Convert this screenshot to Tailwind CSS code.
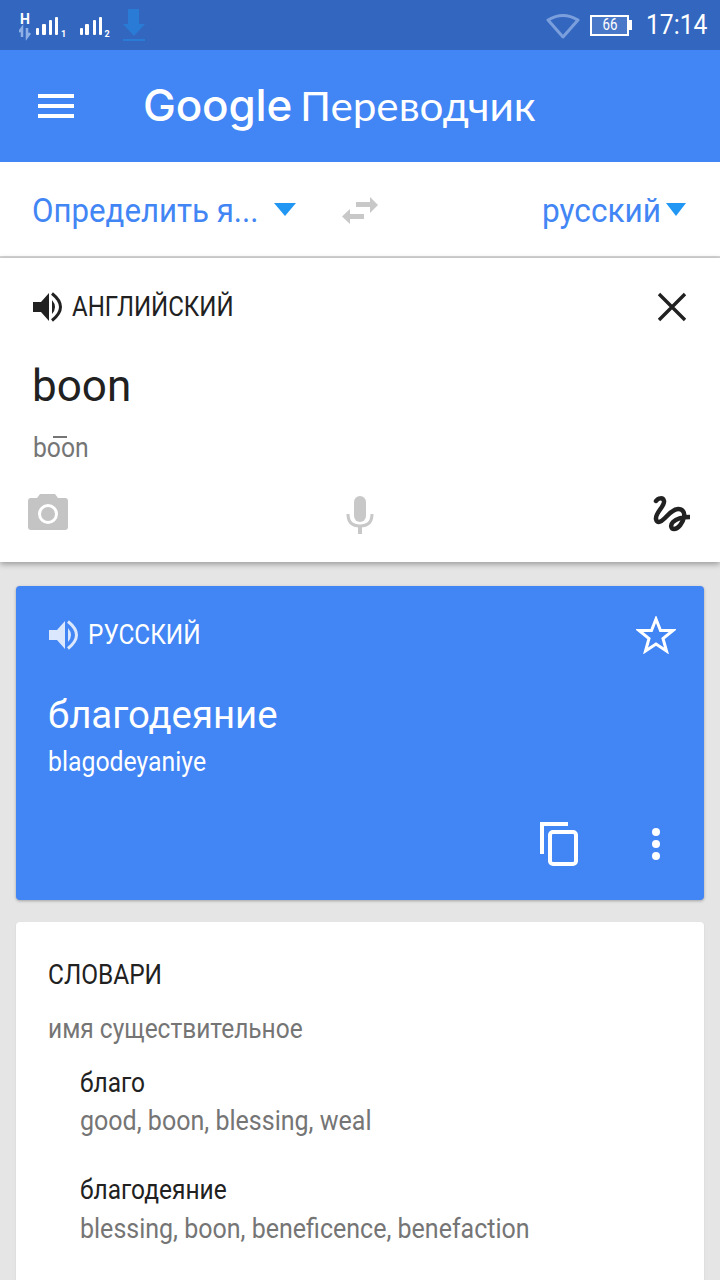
<!DOCTYPE html>
<html>

<head>
  <meta charset="UTF-8">
  <meta name="viewport" content="width=device-width, initial-scale=1.0">
  <script src="https://cdn.jsdelivr.net/npm/@tailwindcss/browser@4"></script>
  <title>Google Переводчик</title>
</head>

<body class="font-['Roboto',sans-serif]">
  <div class="w-[720px] h-[1280px] overflow-hidden bg-[#e5e5e5] flex flex-col">

    <!-- status bar -->
    <div class="h-[50px] shrink-0 bg-[#3367bf] flex items-center pl-[19px] pr-[12px] text-white">
      <svg width="104" height="44" viewBox="0 0 104 44" class="shrink-0">
        <text x="1" y="21" font-family="Roboto" font-size="14" font-weight="700" fill="#fff">H</text>
        <path d="M3 34V25L0 29M8 25V34L11 30" stroke="#8fb0e6" stroke-width="2.500" fill="none" />
        <g fill="#fff">
          <rect x="17" y="25" width="3" height="7" rx="1" />
          <rect x="23" y="21" width="4" height="11" rx="1" />
          <rect x="30" y="17" width="3" height="15" rx="1" />
          <rect x="36" y="14" width="3" height="18" rx="1" />
          <rect x="61" y="25" width="3" height="7" rx="1" />
          <rect x="66" y="21" width="4" height="11" rx="1" />
          <rect x="74" y="17" width="3" height="15" rx="1" />
          <rect x="80" y="14" width="3" height="18" rx="1" />
        </g>
        <text x="42" y="34" font-family="Roboto" font-size="9" font-weight="700" fill="#fff">1</text>
        <text x="85.500" y="34" font-family="Roboto" font-size="9" font-weight="700" fill="#fff">2</text>
      </svg>
      <svg width="22" height="32" viewBox="0 0 22 32" class="shrink-0">
        <path d="M5 0H16V15H22L11 27L0 15H5Z M0 30H22V32H0Z" fill="#2a7bd6" />
      </svg>
      <svg width="34" height="27" viewBox="0 0 34 27" class="shrink-0 ml-auto">
        <path d="M2 8Q17 -1 32 8L17 25Z" fill="none" stroke="#7a9fdc" stroke-width="3" stroke-linejoin="round" />
      </svg>
      <div class="ml-[10px] w-[39px] h-[21px] border-2 border-white flex items-center justify-center bg-[#4a78c8] text-[16px] leading-none">
        <div class="scale-x-[0.83]">66</div>
      </div>
      <div class="w-[3px] h-[10px] bg-white mr-[14px]"></div>
      <div class="w-[62px] text-[28px] leading-none whitespace-nowrap scale-x-[0.88] origin-left">17:14</div>
    </div>

    <!-- app bar -->
    <div class="h-[112px] shrink-0 bg-[#4285f4] flex items-center pl-[38px] text-white">
      <div class="w-[36px] flex flex-col gap-[6px] shrink-0">
        <div class="h-[4px] bg-white"></div>
        <div class="h-[4px] bg-white"></div>
        <div class="h-[4px] bg-white"></div>
      </div>
      <div class="ml-[69px] -mt-[3px] flex items-baseline">
        <div class="w-[157px] font-['Inter',sans-serif] text-[44px] leading-none font-medium tracking-[-0.2px]">Google</div>
        <div class="text-[41px] leading-none font-['Lato',sans-serif] scale-x-[1.03] origin-left">Переводчик</div>
      </div>
    </div>

    <!-- language picker -->
    <div class="h-[96px] shrink-0 bg-white border-b-2 border-[#d6d6d6] flex items-center pl-[32px] pr-[34px] pt-[2px] text-[#4285f4] text-[34px] leading-none">
      <div class="scale-x-[0.918] origin-left w-[242px] whitespace-nowrap">Определить я...</div>
      <div class="w-0 h-0 border-l-[11px] border-r-[11px] border-t-[13px] border-l-transparent border-r-transparent border-t-[#2196f3] -mt-[2px]"></div>
      <svg width="36" height="27" viewBox="0 0 36 27" class="ml-[46px]">
        <path d="M14 5H28V0L36 8L28 16V10H14Z M22 17V22H8V27L0 19.500L8 12V17Z" fill="#c8c8c8" />
      </svg>
      <div class="ml-auto w-[120px] scale-x-[0.93] origin-left whitespace-nowrap">русский</div>
      <div class="w-0 h-0 border-l-[10px] border-r-[10px] border-t-[13px] border-l-transparent border-r-transparent border-t-[#2196f3] ml-[4px] -mt-[2px]"></div>
    </div>

    <!-- source panel -->
    <div class="h-[304px] shrink-0 bg-white shadow-[0_2px_6px_rgba(0,0,0,0.35)] relative flex flex-col">
      <div class="h-[98px] flex items-center pl-[32px] pr-[32px] text-[#212121]">
        <svg width="32" height="30" viewBox="0 0 32 30">
          <path d="M1 10H9L17 1V29L9 20H1Z" fill="#212121" />
          <path d="M20 8Q26 15 20 22Z" fill="#212121" />
          <path d="M20 1.500Q37 15 20 28.500" fill="none" stroke="#212121" stroke-width="3" />
        </svg>
        <div class="ml-[8px] text-[27px] leading-none scale-x-[0.89] origin-left whitespace-nowrap">АНГЛИЙСКИЙ</div>
        <svg width="30" height="30" viewBox="0 0 30 30" class="ml-auto mr-[1px]">
          <path d="M2 2L28 28M28 2L2 28" stroke="#212121" stroke-width="3.400" fill="none" />
        </svg>
      </div>
      <div class="pl-[32px] text-[44px] leading-[60px] text-[#212121]">boon</div>
      <div class="relative ml-[33px] mt-[14px] text-[27px] leading-[36px] text-[#757575]">
        <div class="scale-x-[0.915] origin-left">boon</div>
        <div class="absolute left-[20px] top-[6px] w-[14px] h-[2px] bg-[#757575]"></div>
      </div>
      <div class="mt-[28px] pl-[28px] pr-[30px] flex items-start justify-between">
        <svg width="40" height="36" viewBox="0 0 40 36">
          <path d="M12 0H27L30 4H37Q40 4 40 7V33Q40 36 37 36H3Q0 36 0 33V7Q0 4 3 4H9Z" fill="#c4c4c4" />
          <circle cx="20" cy="20" r="8.500" fill="none" stroke="#fff" stroke-width="3" />
        </svg>
        <svg width="28" height="38" viewBox="0 0 28 38" class="mt-[2px] -ml-[1px]">
          <rect x="8" y="0" width="12" height="26" rx="6" fill="#c8c8c8" />
          <path d="M2 18Q2 30 14 30Q26 30 26 18" fill="none" stroke="#c8c8c8" stroke-width="3" />
          <path d="M14 29V38" stroke="#c8c8c8" stroke-width="4" />
        </svg>
        <svg width="37" height="36" viewBox="0 0 37 36" class="mt-[2px]">
          <path d="M3 5C5 2 10 1 11 5C12 10 2 17 3 23C4 28 8 26 12 22C16 18 20 13 25 13C30 13 32 17 31 21C30 27 25 33 21 33C18 33 17 29 20 26C23 23 30 21 37 21" fill="none" stroke="#212121" stroke-width="4.500" stroke-linecap="round" />
        </svg>
      </div>
    </div>

    <!-- translation card -->
    <div class="mx-[16px] mt-[24px] h-[314px] shrink-0 rounded-[4px] bg-[#4285f4] shadow-[0_1px_3px_rgba(0,0,0,0.3)] text-white flex flex-col pl-[32px] pr-[28px]">
      <div class="h-[98px] flex items-center">
        <svg width="32" height="30" viewBox="0 0 32 30">
          <path d="M1 10H9L17 1V29L9 20H1Z" fill="#dbe7fd" />
          <path d="M20 8Q26 15 20 22Z" fill="#dbe7fd" />
          <path d="M20 1.500Q37 15 20 28.500" fill="none" stroke="#dbe7fd" stroke-width="3" />
        </svg>
        <div class="ml-[8px] text-[27px] leading-none scale-x-[0.903] origin-left whitespace-nowrap">РУССКИЙ</div>
        <svg width="40" height="38" viewBox="0 0 40 38" class="ml-auto">
          <path d="M20 3L24.500 14.500H37L27 22.500L30.500 35L20 28L9.500 35L13 22.500L3 14.500H15.500Z" fill="none" stroke="#fff" stroke-width="3" />
        </svg>
      </div>
      <div class="text-[39px] leading-[50px] mt-[6px] scale-x-[0.983] origin-left">благодеяние</div>
      <div class="text-[27px] leading-[36px] mt-[4px] scale-x-[0.919] origin-left">blagodeyaniye</div>
      <div class="mt-auto h-[100px] flex items-center justify-end pb-[12px] gap-[74px] pr-[16px]">
        <svg width="38" height="44" viewBox="0 0 38 44">
          <path d="M2 32V2H28" fill="none" stroke="#fff" stroke-width="4" />
          <rect x="10" y="10" width="26" height="32" rx="3" fill="none" stroke="#fff" stroke-width="4" />
        </svg>
        <div class="flex flex-col gap-[4px]">
          <div class="w-[8px] h-[8px] rounded-full bg-white"></div>
          <div class="w-[8px] h-[8px] rounded-full bg-white"></div>
          <div class="w-[8px] h-[8px] rounded-full bg-white"></div>
        </div>
      </div>
    </div>

    <!-- dictionary card -->
    <div class="mx-[16px] mt-[22px] flex-1 rounded-t-[4px] bg-white shadow-[0_1px_2px_rgba(0,0,0,0.1)] pl-[32px] pt-[33px]">
      <div class="text-[27px] leading-[40px] text-[#212121] scale-x-[0.905] origin-left">СЛОВАРИ</div>
      <div class="mt-[16px] text-[27px] leading-[36px] text-[#757575] scale-x-[0.907] origin-left">имя существительное</div>
      <div class="mt-[18px] pl-[32px]">
        <div class="text-[27px] leading-[36px] text-[#212121] scale-x-[0.907] origin-left">благо</div>
        <div class="mt-[2px] text-[27px] leading-[36px] text-[#757575] scale-x-[0.927] origin-left">good, boon, blessing, weal</div>
        <div class="mt-[33px] text-[27px] leading-[36px] text-[#212121] scale-x-[0.907] origin-left">благодеяние</div>
        <div class="mt-[3px] text-[27px] leading-[36px] text-[#757575] scale-x-[0.926] origin-left">blessing, boon, beneficence, benefaction</div>
      </div>
    </div>

  </div>
</body>

</html>
